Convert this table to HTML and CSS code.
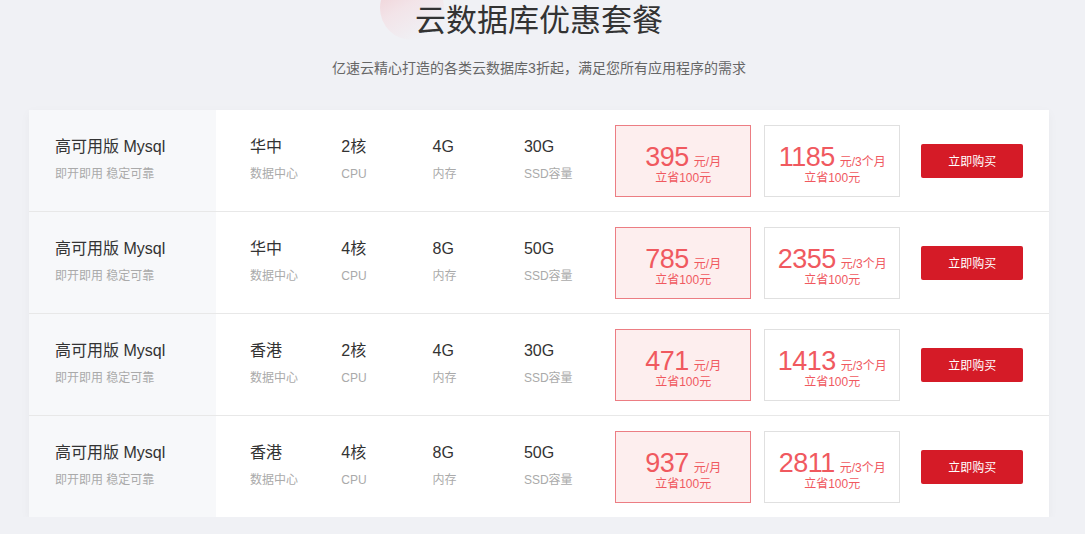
FILE: index.html
```html
<!DOCTYPE html>
<html lang="zh-CN">
<head>
<meta charset="utf-8">
<title>云数据库优惠套餐</title>
<link rel="stylesheet" href="styles.css">
</head>
<body>
<div class="page">
  <header class="head">
    <span class="deco"></span>
    <h1 class="title">云数据库优惠套餐</h1>
    <p class="sub">亿速云精心打造的各类云数据库3折起，满足您所有应用程序的需求</p>
  </header>
  <section class="card">
    <div class="row">
      <div class="name"><div class="v">高可用版 Mysql</div><div class="l">即开即用 稳定可靠</div></div>
      <div class="spec"><div class="v">华中</div><div class="l">数据中心</div></div>
      <div class="spec"><div class="v">2核</div><div class="l">CPU</div></div>
      <div class="spec"><div class="v">4G</div><div class="l">内存</div></div>
      <div class="spec"><div class="v">30G</div><div class="l">SSD容量</div></div>
      <div class="price hot"><div class="p"><span class="num">395</span><span class="unit">元/月</span></div><div class="save">立省100元</div></div>
      <div class="price"><div class="p"><span class="num">1185</span><span class="unit">元/3个月</span></div><div class="save">立省100元</div></div>
      <button class="buy">立即购买</button>
    </div>
    <div class="row">
      <div class="name"><div class="v">高可用版 Mysql</div><div class="l">即开即用 稳定可靠</div></div>
      <div class="spec"><div class="v">华中</div><div class="l">数据中心</div></div>
      <div class="spec"><div class="v">4核</div><div class="l">CPU</div></div>
      <div class="spec"><div class="v">8G</div><div class="l">内存</div></div>
      <div class="spec"><div class="v">50G</div><div class="l">SSD容量</div></div>
      <div class="price hot"><div class="p"><span class="num">785</span><span class="unit">元/月</span></div><div class="save">立省100元</div></div>
      <div class="price"><div class="p"><span class="num">2355</span><span class="unit">元/3个月</span></div><div class="save">立省100元</div></div>
      <button class="buy">立即购买</button>
    </div>
    <div class="row">
      <div class="name"><div class="v">高可用版 Mysql</div><div class="l">即开即用 稳定可靠</div></div>
      <div class="spec"><div class="v">香港</div><div class="l">数据中心</div></div>
      <div class="spec"><div class="v">2核</div><div class="l">CPU</div></div>
      <div class="spec"><div class="v">4G</div><div class="l">内存</div></div>
      <div class="spec"><div class="v">30G</div><div class="l">SSD容量</div></div>
      <div class="price hot"><div class="p"><span class="num">471</span><span class="unit">元/月</span></div><div class="save">立省100元</div></div>
      <div class="price"><div class="p"><span class="num">1413</span><span class="unit">元/3个月</span></div><div class="save">立省100元</div></div>
      <button class="buy">立即购买</button>
    </div>
    <div class="row">
      <div class="name"><div class="v">高可用版 Mysql</div><div class="l">即开即用 稳定可靠</div></div>
      <div class="spec"><div class="v">香港</div><div class="l">数据中心</div></div>
      <div class="spec"><div class="v">4核</div><div class="l">CPU</div></div>
      <div class="spec"><div class="v">8G</div><div class="l">内存</div></div>
      <div class="spec"><div class="v">50G</div><div class="l">SSD容量</div></div>
      <div class="price hot"><div class="p"><span class="num">937</span><span class="unit">元/月</span></div><div class="save">立省100元</div></div>
      <div class="price"><div class="p"><span class="num">2811</span><span class="unit">元/3个月</span></div><div class="save">立省100元</div></div>
      <button class="buy">立即购买</button>
    </div>
  </section>
</div>
</body>
</html>
```

FILE: styles.css
```css
* { box-sizing: border-box; }
html, body { margin: 0; padding: 0; }
body {
  background: #f0f1f5;
  font-family: "Liberation Sans", "Noto Sans CJK SC", sans-serif;
  color: #333;
  overflow: hidden;
}
.page {
  width: 1020px;
  margin-left: 29px;
}
.head {
  position: relative;
  text-align: center;
  height: 110px;
  padding-top: 5px;
}
.deco {
  position: absolute;
  left: 351px;
  top: -24px;
  width: 64px;
  height: 64px;
  border-radius: 50%;
  background: linear-gradient(150deg, rgba(240, 190, 196, 0.75) 0%, rgba(245, 215, 220, 0.5) 45%, rgba(240, 241, 245, 0) 85%);
}
.title {
  position: relative;
  margin: 0;
  font-size: 31px;
  line-height: 31px;
  font-weight: normal;
  color: #333;
}
.sub {
  margin: 22px 0 0;
  font-size: 14px;
  line-height: 20px;
  color: #666;
}
.card {
  background: #fff;
  box-shadow: 0 3px 10px rgba(0, 0, 0, 0.04);
}
.row {
  display: flex;
  align-items: center;
  height: 102px;
  border-bottom: 1px solid #e8e8e8;
}
.row:last-child { border-bottom: none; height: 101px; }
.name {
  align-self: stretch;
  width: 187px;
  background: #f7f8fa;
  padding-left: 26px;
  display: flex;
  flex-direction: column;
  justify-content: center;
  margin-right: 34px;
}
.name, .spec { padding-bottom: 2px; }
.v {
  font-size: 16px;
  line-height: 20px;
  color: #333;
}
.l {
  margin-top: 9px;
  font-size: 12px;
  line-height: 16px;
  color: #aaa;
}
.spec { width: 91.3px; }
.price {
  width: 136px;
  height: 72px;
  border: 1px solid #e0e0e0;
  background: #fff;
  color: #f0595f;
  text-align: center;
  padding-top: 18px;
}
.price + .price { margin-left: 13px; }
.price.hot {
  background: #fdeeee;
  border-color: #ec7d83;
}
.p { line-height: 26px; height: 26px; }
.num {
  font-size: 27px;
  letter-spacing: -0.5px;
}
.unit {
  font-size: 12px;
  margin-left: 5px;
}
.save {
  font-size: 12px;
  line-height: 14px;
  margin-top: 1px;
}
.buy {
  margin-left: 21px;
  width: 102px;
  height: 34px;
  border: none;
  border-radius: 2px;
  background: #d51b27;
  color: #fff;
  font-family: "Liberation Sans", "Noto Sans CJK SC", sans-serif;
  font-size: 12px;
  padding: 0;
}
```
